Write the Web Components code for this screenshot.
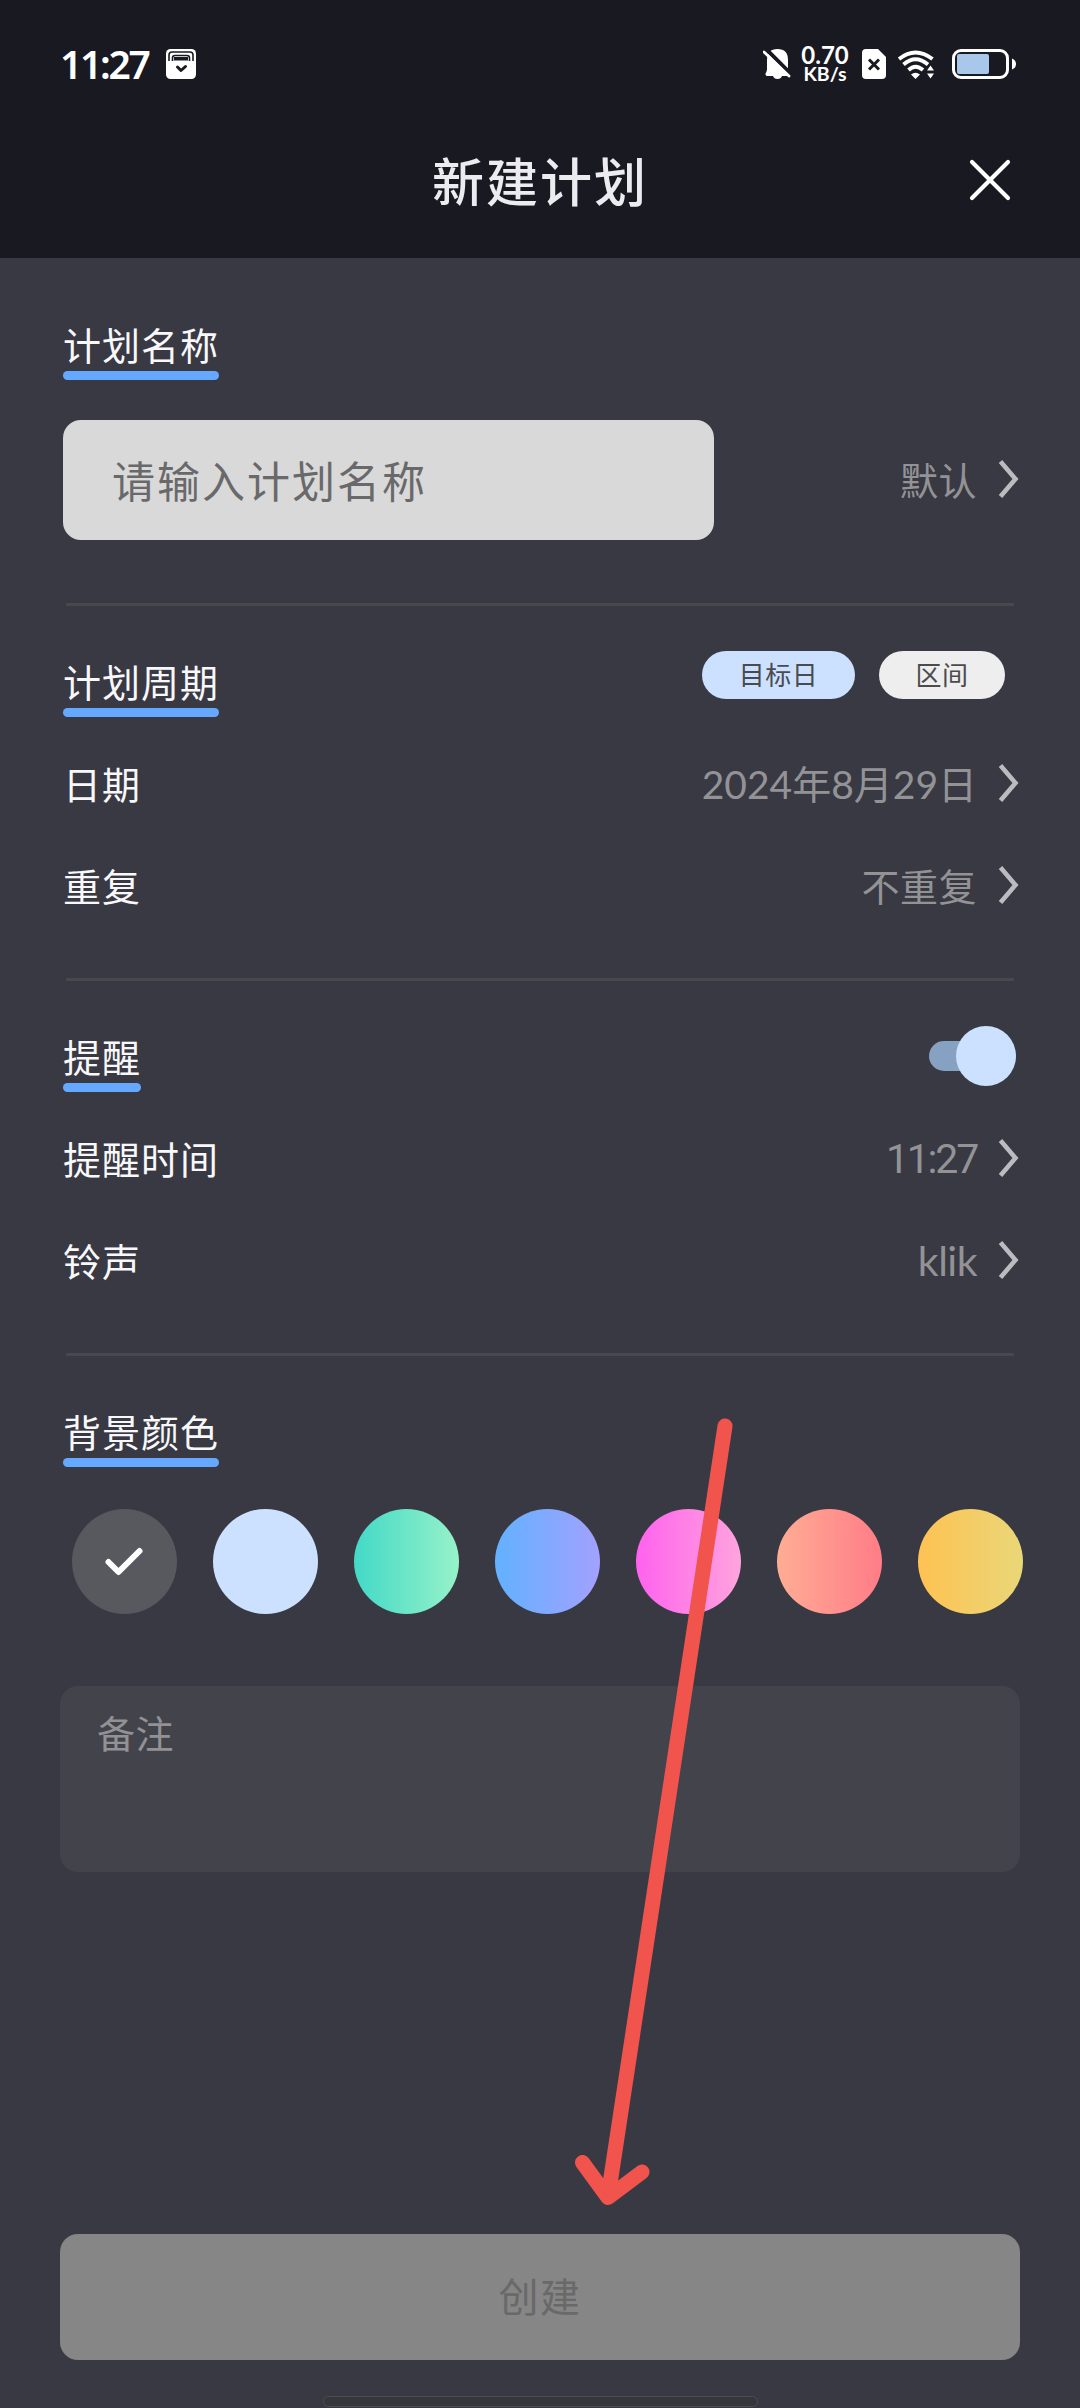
<!DOCTYPE html>
<html lang="zh-CN">
<head>
<meta charset="utf-8">
<title>新建计划</title>
<style>
html,body{margin:0;padding:0;background:#393943}
body{width:1080px;height:2408px;overflow:hidden;font-family:Lato,"Noto Sans CJK SC",sans-serif;color:#f8f8fb}
</style>
</head>
<body>
<plan-screen></plan-screen>
<script>
const define = (name, html) => {
  const t = document.createElement('template');
  t.innerHTML = html;
  customElements.define(name, class extends HTMLElement {
    constructor() {
      super();
      this.attachShadow({mode: 'open'}).append(t.content.cloneNode(true));
    }
  });
};

define('status-bar', `
<style>
:host{display:flex;align-items:center;height:84px;padding:22px 64px 0 60px;font-family:"Noto Sans",sans-serif;color:#fff}
svg{display:block;flex:none}
.time{font-size:39px;font-weight:600;line-height:40px;letter-spacing:-2.3px;width:106px;white-space:nowrap}
.right{margin-left:auto;display:flex;align-items:center}
.net{display:flex;flex-direction:column;align-items:center;width:48px;margin:0 13px 1px 10px;font-family:Lato,sans-serif;font-weight:700}
.net b{font-size:24px;line-height:20px;font-weight:700;letter-spacing:0}
.net i{font-style:normal;font-size:19.5px;line-height:17px;font-weight:700}
</style>
<span class="time">11:27</span>
<svg width="30" height="30" viewBox="0 0 30 30"><rect width="30" height="30" rx="4.5" fill="#fff"/><path d="M3 12V6Q3 3 6 3H24Q27 3 27 6V12M6.500 12V9Q6.500 6.500 9 6.500H21Q23.500 6.500 23.500 9V12" fill="none" stroke="#191922" stroke-width="1.600"/><path d="M8 8h14v3.500H8z" fill="#191922"/><path d="M11.500 18L15 21.500L19.500 17.500" fill="none" stroke="#191922" stroke-width="3" stroke-linecap="round" stroke-linejoin="round"/></svg>
<div class="right">
<svg width="28" height="30" viewBox="0 0 28 30"><path d="M4 27Q1.500 26 3 23.500Q4 22 4 20V11Q4 0 14.500 0Q25 0 25 11V20Q25 23 27.500 26Q28 27 26 27H19Q18 30 14.500 30Q11 30 10 27Z" fill="#fff"/><path d="M3 0L29 26" stroke="#191922" stroke-width="4"/><path d="M1 3L26 27" stroke="#fff" stroke-width="2.800" stroke-linecap="round"/></svg>
<div class="net"><b>0.70</b><i>KB/s</i></div>
<svg width="24" height="30" viewBox="0 0 24 30"><path d="M4 0H16L24 8V26Q24 30 20 30H4Q0 30 0 26V4Q0 0 4 0Z" fill="#fff"/><path d="M7 10.500L17 20.500M17 10.500L7 20.500" stroke="#191922" stroke-width="3"/></svg>
<svg style="margin-left:11px" width="38" height="30" viewBox="0 0 38 30" fill="none" stroke="#fff" stroke-width="3.800"><path d="M2 10Q18.500-3 35.500 10M6.500 15.500Q18.500 5 31 15.500M11.500 21Q18.500 14.500 26 21"/><path d="M14 25.500Q18.500 22 23 25.500L18.500 30Z" fill="#fff" stroke="none"/><path d="M28 17h10v13H28z" fill="#191922" stroke="none"/><path d="M33.500 16.500l3.500 5h-7zM33.500 29.500l3.500-5h-7z" fill="#fff" stroke="none"/></svg>
<svg style="margin-left:17px" width="64" height="30" viewBox="0 0 64 30"><rect x="1.500" y="1.500" width="54" height="27" rx="7.500" fill="none" stroke="#fff" stroke-width="3"/><rect x="5" y="5" width="32" height="20" rx="2" fill="#a8c7eb"/><path d="M60 9.500Q64 11 64 15T60 20.500Z" fill="#fff"/></svg>
</div>`);

define('app-bar', `
<style>
:host{display:grid;grid-template-columns:1fr auto 1fr;align-items:center;height:152px;color:#ececf0}
h1{grid-column:2;margin:0;font-size:52px;line-height:60px;font-weight:500;letter-spacing:2px}
svg{display:block;justify-self:end;margin:0 68px 4px 0}
</style>
<h1><slot></slot></h1>
<svg width="44" height="44" viewBox="0 0 44 44"><path d="M4 4L40 40M40 4L4 40" stroke="#fff" stroke-width="4.200" stroke-linecap="round"/></svg>`);

define('section-head', `
<style>
:host{display:flex;align-items:flex-start;justify-content:space-between;padding-top:45px}
h2{margin:12px 0 0;display:flex;flex-direction:column;gap:6px;font-size:38px;line-height:39px;font-weight:400;letter-spacing:1px;padding:0;white-space:nowrap}
h2::after{content:"";height:9px;border-radius:4.5px;background:#64a8ff}
</style>
<h2><span><slot></slot></span></h2><slot name="end"></slot>`);

define('chevron-icon', `
<style>:host{display:block;flex:none;width:24px;height:42px}svg{display:block}</style>
<svg width="24" height="42" viewBox="0 0 24 42"><path d="M3.500 3.500L18.500 21L3.500 38.500" fill="none" stroke="#bcbcc0" stroke-width="4.600"/></svg>`);

define('value-link', `
<style>
:host{display:flex;align-items:center;color:#939396;font-size:38px;line-height:42px;letter-spacing:.5px}
chevron-icon{margin:0 -1px 2px 20px}
</style><slot></slot><chevron-icon></chevron-icon>`);

define('form-row', `
<style>
:host{display:flex;align-items:center;justify-content:space-between;box-sizing:border-box;height:102px;padding-bottom:3px;font-size:38px;line-height:42px;letter-spacing:1px}
</style><span><slot></slot></span><slot name="end"></slot>`);

define('form-divider', `
<style>:host{display:block;height:3px;margin:0 6px 0 3px;background:#49494d;border-radius:1px}</style>`);

define('choice-pill', `
<style>
:host{display:flex;align-items:center;justify-content:center;box-sizing:border-box;height:48px;border-radius:24px;background:var(--pill,#eeeeee);color:#4b4b4e;font-size:26px;line-height:30px;letter-spacing:.5px;width:126px}
:host([selected]){--pill:#cbe1ff;width:153px}
</style><slot></slot>`);

define('toggle-switch', `
<style>
:host{display:flex;align-items:center;width:87px;height:60px;margin-right:4px}
.track{width:87px;height:30px;border-radius:15px;background:#86a1c2;display:flex;align-items:center;justify-content:flex-end}
.thumb{width:60px;height:60px;border-radius:50%;background:#cbe1ff;flex:none}
</style><div class="track"><div class="thumb"></div></div>`);

define('text-field', `
<style>
:host{display:flex;align-items:center;box-sizing:border-box;width:651px;height:120px;padding:3px 0 0 49px;border-radius:18px;background:#d9d9d9;color:#69696b;font-size:43px;line-height:50px;letter-spacing:2px}
</style><slot></slot>`);

define('color-swatch', `
<style>
:host{display:flex;align-items:center;justify-content:center;width:105px;height:105px;border-radius:50%;background:var(--fill)}
svg{display:none}:host([selected]) svg{display:block}
</style>
<svg width="105" height="105" viewBox="0 0 105 105"><path d="M36.500 53L46.500 63L67.500 42" fill="none" stroke="#fff" stroke-width="6" stroke-linecap="round" stroke-linejoin="round"/></svg>`);

define('note-area', `
<style>
:host{display:block;box-sizing:border-box;height:186px;padding:26px 37px;border-radius:18px;background:#43434c;color:#929295;font-size:38px;line-height:42px;letter-spacing:.5px}
</style><slot></slot>`);

define('submit-button', `
<style>
:host{display:flex;align-items:center;justify-content:center;height:126px;border-radius:18px;background:#868686;color:#69696a;font-size:40px;line-height:46px;letter-spacing:1.5px}
</style><span><slot></slot></span>`);

define('pointer-arrow', `
<style>:host{position:absolute;left:0;top:0;width:1080px;height:2408px;pointer-events:none}svg{display:block}</style>
<svg width="1080" height="2408" viewBox="0 0 1080 2408"><path d="M725 1426L608 2197M582.500 2162.500L608 2197.500L642 2172" fill="none" stroke="#f1544c" stroke-width="15" stroke-linecap="round" stroke-linejoin="round"/></svg>`);

define('plan-screen', `
<style>
:host{display:flex;flex-direction:column;position:relative;width:1080px;height:2408px;background:#393943}
header{background:#191922;height:258px}
main{display:flex;flex-direction:column;padding:0 60px 0 63px}
.first{padding-top:56px}
.name{display:flex;justify-content:space-between;align-items:center;padding:40px 0 63px}
.rows{padding:17px 0 40px}
.pills{display:flex;gap:24px;margin-right:15px}
.swatches{display:flex;gap:36px;padding:42px 0 72px 9px;margin-right:-10px}
note-area{margin-left:-3px}
footer{display:flex;flex-direction:column;padding:0 60px;margin-top:362px}
.clock{font-family:Roboto,sans-serif;font-size:41px;letter-spacing:-2.2px}
.ring{font-size:41px;letter-spacing:-.5px}
.date{font-size:39px;letter-spacing:0}
.home{align-self:center;box-sizing:border-box;width:435px;height:11px;margin-top:36px;border:1px solid #4d4d53;border-radius:6px;background:#36373b}
</style>
<header><status-bar></status-bar><app-bar>新建计划</app-bar></header>
<main>
<section-head class="first">计划名称</section-head>
<div class="name"><text-field>请输入计划名称</text-field><value-link>默认</value-link></div>
<form-divider></form-divider>
<section-head>计划周期<div slot="end" class="pills"><choice-pill selected>目标日</choice-pill><choice-pill>区间</choice-pill></div></section-head>
<div class="rows">
<form-row>日期<value-link slot="end" class="date">2024年8月29日</value-link></form-row>
<form-row>重复<value-link slot="end">不重复</value-link></form-row>
</div>
<form-divider></form-divider>
<section-head>提醒<toggle-switch slot="end"></toggle-switch></section-head>
<div class="rows">
<form-row>提醒时间<value-link slot="end" class="clock">11:27</value-link></form-row>
<form-row>铃声<value-link slot="end" class="ring">klik</value-link></form-row>
</div>
<form-divider></form-divider>
<section-head>背景颜色</section-head>
<div class="swatches">
<color-swatch selected style="--fill:#58585f"></color-swatch>
<color-swatch style="--fill:#cbe1ff"></color-swatch>
<color-swatch style="--fill:linear-gradient(90deg,#43d9c7,#96f2c9)"></color-swatch>
<color-swatch style="--fill:linear-gradient(90deg,#62b1ff,#a3a1ff)"></color-swatch>
<color-swatch style="--fill:linear-gradient(90deg,#ff62ee,#ffa4de)"></color-swatch>
<color-swatch style="--fill:linear-gradient(90deg,#ffad95,#ff7c87)"></color-swatch>
<color-swatch style="--fill:linear-gradient(90deg,#ffc252,#e9d778)"></color-swatch>
</div>
<note-area>备注</note-area>
</main>
<footer><submit-button>创建</submit-button><div class="home"></div></footer>
<pointer-arrow></pointer-arrow>`);
</script>
</body>
</html>
